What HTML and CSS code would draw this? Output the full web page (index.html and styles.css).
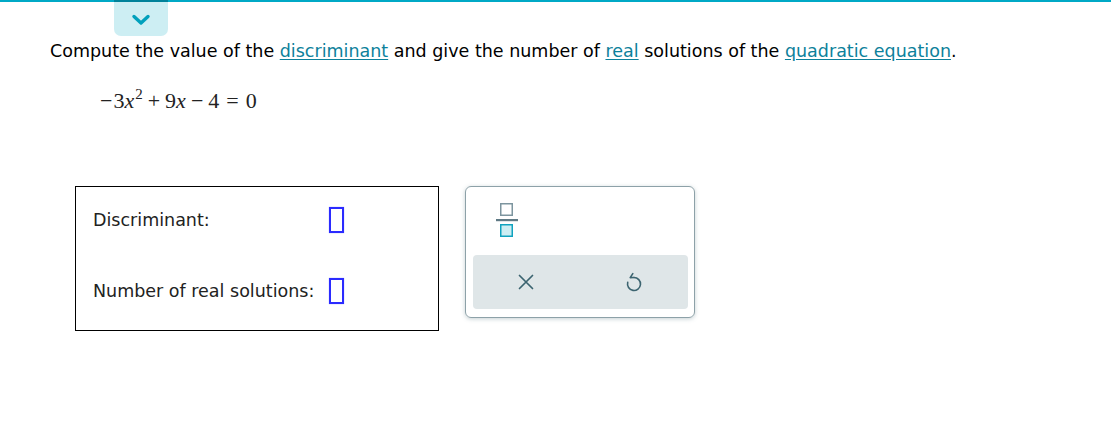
FILE: index.html
```html
<!DOCTYPE html>
<html>
<head>
<meta charset="utf-8">
<link rel="stylesheet" href="styles.css">
</head>
<body>
<div class="topline"></div>
<div class="tabrow">
  <div class="tab">
    <svg width="20" height="12" viewBox="0 0 20 12"><path d="M3 2.5 L10 9 L17 2.5" fill="none" stroke="#00a0bc" stroke-width="3.4" stroke-linecap="round" stroke-linejoin="round"/></svg>
  </div>
</div>
<p class="question">Compute the value of the <a href="#">discriminant</a> and give the number of <a href="#">real</a> solutions of the <a href="#">quadratic equation</a>.</p>
<div class="equation"><span class="op lead">−</span>3<span class="var">x</span><sup>2</sup><span class="op">+</span>9<span class="var">x</span><span class="op">−</span>4<span class="op rel">=</span>0</div>
<div class="work">
  <div class="answers">
    <div class="row"><span class="label">Discriminant:</span><span class="input"></span></div>
    <div class="row"><span class="label">Number of real solutions:</span><span class="input"></span></div>
  </div>
  <div class="palette">
    <div class="tools">
      <svg class="frac" width="22" height="34" viewBox="0 0 22 34">
        <rect x="4.75" y="0.75" width="11.5" height="11.5" fill="#fff" stroke="#7d959f" stroke-width="1.5"/>
        <rect x="0" y="16" width="22" height="2.2" fill="#5f7a85"/>
        <rect x="4.75" y="21.75" width="11.5" height="11.5" fill="#cdeef3" stroke="#10a3bf" stroke-width="1.5"/>
      </svg>
    </div>
    <div class="actions">
      <svg width="16" height="16" viewBox="0 0 16 16"><path d="M1.5 1.5 L14.5 14.5 M14.5 1.5 L1.5 14.5" stroke="#3c6470" stroke-width="1.7" stroke-linecap="round"/></svg>
      <svg width="18" height="20" viewBox="0 0 18 20"><path d="M9 5.5 A6.5 6.5 0 1 1 2.7 10.4" fill="none" stroke="#3c6470" stroke-width="1.6" stroke-linecap="round"/><path d="M7.8 1.6 L5.2 5.6 L9 5.5" fill="none" stroke="#3c6470" stroke-width="1.6" stroke-linecap="round" stroke-linejoin="round"/></svg>
    </div>
  </div>
</div>
</body>
</html>
```

FILE: styles.css
```css
html, body {
  margin: 0;
  padding: 0;
  background: #fff;
}
body {
  font-family: "DejaVu Sans", Verdana, sans-serif;
  font-size: 17.5px;
  color: #000;
}
.topline {
  height: 2px;
  background: #00a9c6;
}
.tabrow {
  padding-left: 114px;
  height: 34px;
  margin-top: -2px;
}
.tab {
  width: 54px;
  height: 36px;
  background: #cdeef3;
  border-top: 2px solid #00829a;
  border-radius: 0 0 7px 7px;
  display: flex;
  justify-content: center;
  align-items: flex-start;
  box-sizing: border-box;
  padding-top: 12px;
}
.question {
  margin: 6px 0 0 50px;
  font-size: 17.5px;
  line-height: 22px;
}
.question a {
  color: #0d819b;
  text-decoration: underline;
  text-underline-offset: 2px;
}
.equation {
  margin: 27px 0 0 100px;
  font-family: "Liberation Serif", "Times New Roman", serif;
  font-size: 22px;
  line-height: 24px;
  color: #222;
}
.equation .var {
  font-style: italic;
}
.equation .op {
  margin: 0 5px;
}
.equation .op.rel {
  margin: 0 7px;
}
.equation .op.lead {
  margin: 0 1px 0 0;
}
.equation sup {
  font-size: 15px;
  line-height: 0;
  position: relative;
  top: -1px;
  margin-left: 1px;
}
.work {
  display: flex;
  align-items: flex-start;
  margin: 73px 0 0 75px;
  gap: 26px;
}
.answers {
  width: 364px;
  height: 145px;
  box-sizing: border-box;
  border: 1px solid #000;
  padding: 20px 0 0 17px;
  display: flex;
  flex-direction: column;
  gap: 45px;
}
.row {
  display: flex;
  align-items: center;
  height: 26px;
}
.label {
  width: 236px;
  color: #222;
}
.input {
  width: 11px;
  height: 22px;
  border: 2px solid #2b2bff;
  box-shadow: 0 0 1px #9a9aff;
  display: inline-block;
}
.palette {
  width: 230px;
  height: 132px;
  box-sizing: border-box;
  border: 1px solid #8da1a8;
  border-radius: 6px;
  box-shadow: 0 1px 4px rgba(90, 120, 130, 0.35);
  padding: 7px 6px 8px 7px;
  display: flex;
  flex-direction: column;
}
.tools {
  height: 61px;
  padding: 9px 0 0 23px;
  box-sizing: border-box;
}
.actions {
  flex: 1;
  background: #dfe6e8;
  border-radius: 4px;
  display: flex;
  align-items: center;
  justify-content: flex-start;
  padding-left: 45px;
  gap: 91px;
}
```
